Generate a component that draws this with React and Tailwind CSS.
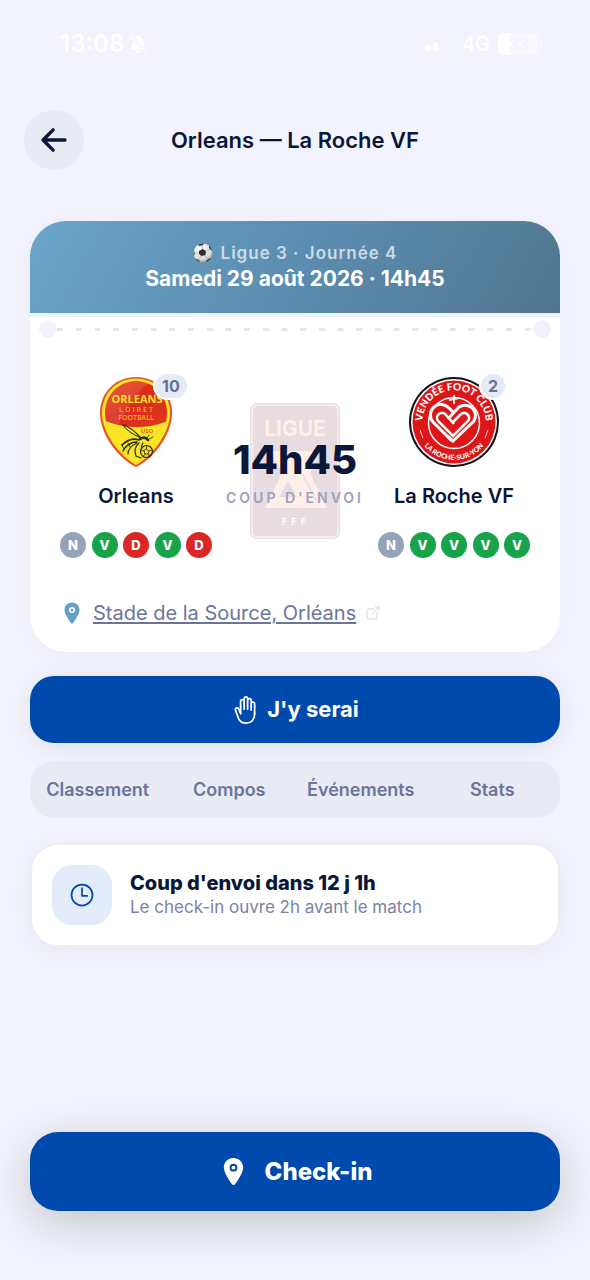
import {
  IoArrowBack,
  IoHandRightOutline,
  IoLocation,
  IoNotificationsOff,
  IoOpenOutline,
  IoTimeOutline,
} from 'react-icons/io5'

const formColors = {
  N: 'bg-[#94a3b8]',
  V: 'bg-[#16a34a]',
  D: 'bg-[#dc2626]',
}

const tabs = ['Classement', 'Compos', 'Événements', 'Stats']

const StatusBar = () => (
  <div className="flex items-center justify-between pl-[60px] pr-[46px] pt-8 text-white">
    <div className="flex items-center gap-1">
      <span className="text-2xl leading-6 font-semibold">13:08</span>
      <IoNotificationsOff className="size-5" />
    </div>
    <div className="flex items-center gap-2">
      <svg className="h-4 w-7" viewBox="0 0 28 16" fill="currentColor">
        <rect x="0" y="9" width="5" height="6" rx="1.5" />
        <rect x="7" y="6" width="5" height="9" rx="1.5" />
        <rect x="14" y="3" width="5" height="12" rx="1.5" opacity="0.2" />
        <rect x="21" y="0" width="5" height="15" rx="1.5" opacity="0.2" />
      </svg>
      <span className="text-xl leading-6 font-medium">4G</span>
      <svg className="h-[22px] w-[46px]" viewBox="0 0 46 22">
        <rect width="40" height="22" rx="7" fill="#fff" opacity="0.5" />
        <path d="M7 0h6v22H7a7 7 0 0 1-7-7V7a7 7 0 0 1 7-7z" fill="#fff" />
        <path d="M42 7q3 1 3 4t-3 4z" fill="#fff" opacity="0.5" />
        <text x="20" y="17" textAnchor="middle" fontSize="16" fontWeight="700" fill="#f2f3fc">33</text>
      </svg>
    </div>
  </div>
)

const SoccerBall = () => (
  <svg className="size-5" viewBox="0 0 20 20">
    <defs>
      <radialGradient id="ball" cx="0.4" cy="0.3" r="0.75">
        <stop offset="0" stopColor="#fff" />
        <stop offset="0.7" stopColor="#dcdcdc" />
        <stop offset="1" stopColor="#8a8a8a" />
      </radialGradient>
      <clipPath id="ball-edge">
        <circle cx="10" cy="10" r="9.5" />
      </clipPath>
    </defs>
    <circle cx="10" cy="10" r="9.5" fill="url(#ball)" />
    <g clipPath="url(#ball-edge)" fill="#2e2f31">
      <path d="M6 8l3.500-2 3.500 2-0.500 4-4 1-2.500-2zM5 0h6l-1 2-4 1zM16 2l4 4-1 2-3-3zM0 8l1.500 1v3L0 13zM3 16l3 1 1 3H3zM13 18l4-3 2 2-5 3z" />
      <path d="M9.500 6L9 2M13 8l4-2M12 12.500l3 4M8.500 13l-3 4M5.500 10H1" stroke="#9a9a9a" strokeWidth="0.6" />
    </g>
  </svg>
)

const OrleansCrest = () => (
  <svg className="h-[92px] w-[76px]" viewBox="0 0 76 92">
    <defs>
      <linearGradient id="orleans-red" x1="0" y1="0" x2="1" y2="1">
        <stop offset="0" stopColor="#f0501e" />
        <stop offset="0.5" stopColor="#d92a1c" />
        <stop offset="1" stopColor="#e03a1a" />
      </linearGradient>
      <clipPath id="orleans-shape">
        <path d="M38 5C55 5 69 19 69 37c0 19-17 42-31 49C24 79 7 56 7 37 7 19 21 5 38 5z" />
      </clipPath>
    </defs>
    <path d="M38 1C58 1 74 16 74 37c0 22-19 46-36 54C21 83 2 59 2 37 2 16 18 1 38 1z" fill="#e8502a" />
    <path d="M38 2.500C57 2.500 72 17 72 37c0 21-19 44-34 52C23 81 4 58 4 37 4 17 19 2.500 38 2.500z" fill="#f8e626" />
    <g clipPath="url(#orleans-shape)">
      <path d="M0 0h76v42Q40 60 0 42z" fill="url(#orleans-red)" />
      <path d="M0 0h60Q36 14 20 50L0 44z" fill="#fff" opacity="0.1" />
    </g>
    <g fontFamily="Open Sans, sans-serif" textAnchor="middle">
      <text x="39" y="27" fontSize="11" fontWeight="700" fill="#fbe122">ORLEANS</text>
      <text x="39" y="36" fontSize="7" fontWeight="600" letterSpacing="2" fill="#f6b02a">LOIRET</text>
      <text x="38" y="44" fontSize="7" fontWeight="600" fill="#f6b02a">FOOTBALL</text>
      <text x="49" y="57" fontSize="6" fontWeight="700" fill="#e8641e">USO</text>
    </g>
    <g stroke="#2b2a10" fill="none" strokeLinecap="round">
      <path d="M25 49q8 2 18 13" strokeWidth="1.2" />
      <path d="M25 49q4 7 18 13" strokeWidth="1" />
      <path d="M42 63q5-3 8 1" strokeWidth="2.6" />
      <path d="M49 62l2-3M51 63l4-2" strokeWidth="0.8" />
      <path d="M41 64q-9-3-17 5" strokeWidth="1.7" />
      <path d="M39 66q-9 0-14 9" strokeWidth="1.4" />
      <path d="M39 67q-9 4-9 11M41 67q-6 5-3 13l5 2M45 67q-2 3-1 5" strokeWidth="1.2" />
      <path d="M24 69l2 4M30 67l2 4" strokeWidth="0.9" />
      <circle cx="48.500" cy="75.500" r="6" strokeWidth="1.2" />
      <path d="M48.500 73l2.500 2-1 3h-3l-1-3zM48.500 73v-3M51 75l3-1M50 78l2 3M47 78l-2 3M46 75l-3-1" strokeWidth="0.8" />
    </g>
  </svg>
)

const LaRocheCrest = () => (
  <svg className="size-[92px]" viewBox="0 0 92 92">
    <defs>
      <path id="crest-arc" d="M15 52A31.600 31.600 0 1 1 77 52" />
      <path id="crest-bottom" d="M8 46a38 38 0 0 0 76 0" />
    </defs>
    <circle cx="46" cy="46" r="45" fill="#151112" />
    <circle cx="46" cy="46" r="43" fill="#fff" />
    <circle cx="46" cy="46" r="41.5" fill="#dd1719" />
    <g fontFamily="Lato, sans-serif" fontWeight="900" fill="#fff" textAnchor="middle">
      <text fontSize="10">
        <textPath href="#crest-arc" startOffset="50%">VENDÉE FOOT CLUB</textPath>
      </text>
      <text fontSize="7">
        <textPath href="#crest-bottom" startOffset="50%">LA ROCHE-SUR-YON</textPath>
      </text>
    </g>
    <g stroke="#fff" fill="none">
      <circle cx="46" cy="47" r="25.5" strokeWidth="1.5" />
      <path d="M46 37l-5-5a10.500 10.500 0 0 0-16 14l19 19" strokeWidth="3" />
      <path d="M40 60l5 5 21-20a10.500 10.500 0 0 0-15-14L40 43" strokeWidth="3" />
      <path d="M46 48l-8-9a5 5 0 0 0-8 6l15 15 15-15a5 5 0 0 0-7-7l-9 9" strokeWidth="2.6" />
      <path d="M46 19v9M41 24l10-2" strokeWidth="1.8" />
      <path d="M12 54l3 8M80 54l-3 8" strokeWidth="0.8" />
    </g>
  </svg>
)

const LeagueLogo = () => (
  <svg className="h-[136px] w-[90px] opacity-15" viewBox="0 0 90 136">
    <rect width="90" height="136" rx="7" fill="#641c30" />
    <rect x="2" y="2" width="86" height="132" rx="5" fill="none" stroke="#f4a58a" strokeWidth="1.5" />
    <text x="45" y="33" textAnchor="middle" fontSize="21" fontWeight="700" fill="#ff9a70">LIGUE</text>
    <path d="M20 48h50L60 70l17 35H15l17-35z" fill="#ff9a70" />
    <path d="M29 94l9-16 9 16z" fill="#641c30" />
    <path d="M53 72l14 27" stroke="#641c30" strokeWidth="1.5" />
    <text x="46" y="122" textAnchor="middle" fontSize="9" fontWeight="600" letterSpacing="4" fill="#fff">FFF</text>
  </svg>
)

const Team = ({ name, rank, form, children }) => (
  <div className="flex w-[152px] flex-col items-center">
    <div className="relative flex justify-center">
      {children}
      <span className="absolute -top-1 left-full -ml-[21px] rounded-full border-2 border-white bg-[#e6eaf5] px-[7px] text-base leading-6 font-bold text-[#66719a]">
        {rank}
      </span>
    </div>
    <h2 className="mt-[14px] text-xl leading-7 font-semibold whitespace-nowrap">{name}</h2>
    <div className="mt-[22px] flex w-full justify-between">
      {form.map((result, i) => (
        <span
          key={i}
          className={`flex size-[26px] items-center justify-center rounded-full text-[13px] leading-4 font-extrabold text-white ${formColors[result]}`}
        >
          {result}
        </span>
      ))}
    </div>
  </div>
)

const App = () => {
  return (
    <div className="flex min-h-screen flex-col bg-[#f2f3fc] font-['Inter',sans-serif] text-[#0b1739]">
      <StatusBar />

      <header className="mt-[54px] grid grid-cols-[60px_1fr_60px] items-center px-6">
        <button aria-label="Retour" className="flex size-[60px] items-center justify-center rounded-full bg-[#e8ebf4]">
          <IoArrowBack className="size-9" />
        </button>
        <h1 className="text-center text-[22px] leading-7 font-semibold">Orleans — La Roche VF</h1>
      </header>

      <main className="mt-[51px] flex flex-col px-[30px]">
        <section className="overflow-hidden rounded-[36px] bg-white shadow-[0_4px_24px_rgba(0,0,0,0.03)]">
          <div className="flex flex-col items-center border-b-4 border-[#f0f3fb] bg-linear-120 from-[#6ba5ca] via-[#5b8db0] to-[#50768f] bg-clip-padding py-5 text-white">
            <p className="flex items-center gap-2 text-[17px] leading-6 font-semibold tracking-[1px] text-white/70">
              <SoccerBall />
              Ligue 3 · Journée 4
            </p>
            <p className="text-[21px] leading-7 font-bold">Samedi 29 août 2026 · 14h45</p>
          </div>

          <div className="flex items-center px-[9px] pt-[3px]">
            <span className="size-[18px] rounded-full bg-[#f2f3fa]"></span>
            <svg className="h-[3px] flex-1">
              <line x1="0" y1="1.5" x2="100%" y2="1.5" stroke="#e4e7ec" strokeWidth="3" strokeDasharray="6 12.7" />
            </svg>
            <span className="size-[18px] rounded-full bg-[#f2f3fa]"></span>
          </div>

          <div className="flex justify-between px-[30px] pt-[38px]">
            <Team name="Orleans" rank={10} form={['N', 'V', 'D', 'V', 'D']}>
              <OrleansCrest />
            </Team>
            <div className="relative flex flex-col items-center">
              <div className="absolute top-[27px]">
                <LeagueLogo />
              </div>
              <p className="relative mt-[60px] text-[40px] leading-[48px] font-extrabold">14h45</p>
              <p className="relative mt-1 text-sm leading-5 font-semibold tracking-[3px] whitespace-nowrap text-[#9ba1bd]">COUP D'ENVOI</p>
            </div>
            <Team name="La Roche VF" rank={2} form={['N', 'V', 'V', 'V', 'V']}>
              <LaRocheCrest />
            </Team>
          </div>

          <div className="flex items-center px-[30px] pt-[41px] pb-[25px] text-[#6b759b]">
            <IoLocation className="size-6 text-[#68a0c4]" />
            <a href="#stade" className="ml-[9px] text-xl leading-7 underline underline-offset-2">Stade de la Source, Orléans</a>
            <IoOpenOutline className="ml-[9px] size-4 text-[#cddae5]" />
          </div>
        </section>

        <button className="mt-6 flex items-center justify-center gap-2 rounded-3xl bg-[#004aad] py-[19px] text-white shadow-[0_4px_28px_rgba(0,0,0,0.08)]">
          <IoHandRightOutline className="size-7" />
          <span className="text-[22px] leading-[29px] font-bold">J'y serai</span>
        </button>

        <nav className="mt-[18px] grid grid-cols-4 rounded-3xl bg-[#e8ebf4] px-[2px] py-4">
          {tabs.map((tab) => (
            <button key={tab} className="text-lg leading-[25px] font-semibold text-[#6b759b]">
              {tab}
            </button>
          ))}
        </nav>

        <section className="mt-[25px] flex items-center gap-[18px] rounded-[28px] border-2 border-[#eceef3] bg-white p-5 shadow-[0_4px_28px_rgba(0,0,0,0.05)]">
          <div className="flex size-[60px] items-center justify-center rounded-[20px] bg-[#e4ecfc] text-[#004aad]">
            <IoTimeOutline className="size-7" />
          </div>
          <div>
            <h3 className="text-xl leading-6 font-extrabold">Coup d'envoi dans 12 j 1h</h3>
            <p className="text-[17px] leading-6 text-[#7a83a3]">Le check-in ouvre 2h avant le match</p>
          </div>
        </section>
      </main>

      <footer className="mt-auto flex px-[30px] pt-8 pb-[69px]">
        <button className="flex flex-1 items-center justify-center gap-4 rounded-[28px] bg-[#004aad] py-6 text-white shadow-[0_12px_48px_rgba(0,0,0,0.2)]">
          <IoLocation className="size-[31px]" />
          <span className="text-2xl leading-[31px] font-extrabold">Check-in</span>
        </button>
      </footer>
    </div>
  )
}

export default App
